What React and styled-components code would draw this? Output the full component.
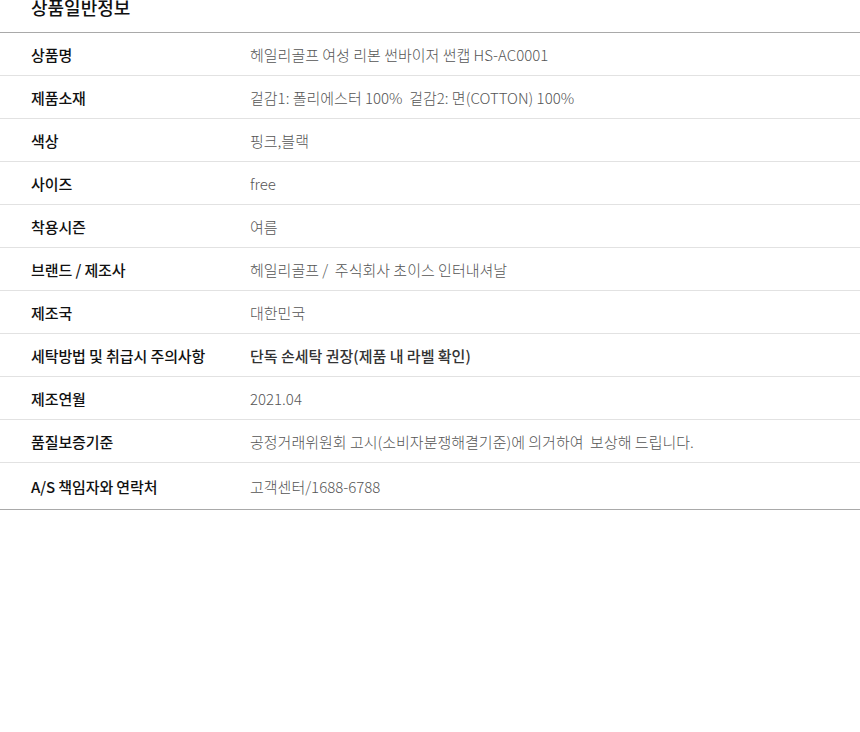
import React from "react";
import styled, { createGlobalStyle } from "styled-components";

const Global = createGlobalStyle`
  html, body { margin: 0; padding: 0; background: #fff; }
  body { font-family: "Noto Sans CJK KR", "Noto Sans", sans-serif; }
`;

const Wrap = styled.div`
  width: 860px;
`;

const Title = styled.h3`
  margin: -2px 0 0 0;
  padding: 0 0 0 31px;
  height: 34px;
  box-sizing: border-box;
  font-size: 18px;
  line-height: 18px;
  font-weight: 500;
  color: #111;
`;

const Table = styled.div`
  border-top: 1px solid #a9a9a9;
  border-bottom: 1px solid #a9a9a9;
`;

const Row = styled.div`
  display: grid;
  grid-template-columns: 219px 1fr;
  align-items: center;
  padding-left: 31px;
  height: ${(p) => (p.$tall ? 46 : 42)}px;
  border-bottom: ${(p) => (p.$last ? "none" : "1px solid #e2e2e2")};
`;

const Label = styled.div`
  font-size: 15px;
  font-weight: 500;
  color: #111;
  letter-spacing: -0.1px;
`;

const Value = styled.div`
  font-size: 15px;
  font-weight: ${(p) => (p.$strong ? 500 : 300)};
  color: ${(p) => (p.$strong ? "#333" : "#555")};
  white-space: pre;
`;

const rows = [
  ["상품명", "헤일리골프 여성 리본 썬바이저 썬캡 HS-AC0001"],
  ["제품소재", "겉감1: 폴리에스터 100%  겉감2: 면(COTTON) 100%"],
  ["색상", "핑크,블랙"],
  ["사이즈", "free"],
  ["착용시즌", "여름"],
  ["브랜드 / 제조사", "헤일리골프 /  주식회사 초이스 인터내셔날"],
  ["제조국", "대한민국"],
  ["세탁방법 및 취급시 주의사항", "단독 손세탁 권장(제품 내 라벨 확인)", true],
  ["제조연월", "2021.04"],
  ["품질보증기준", "공정거래위원회 고시(소비자분쟁해결기준)에 의거하여  보상해 드립니다."],
  ["A/S 책임자와 연락처", "고객센터/1688-6788"],
];

export default function App() {
  return (
    <Wrap>
      <Global />
      <Title>상품일반정보</Title>
      <Table>
        {rows.map(([l, v, s], i) => (
          <Row key={l} $last={i === rows.length - 1} $tall={i === rows.length - 1}>
            <Label>{l}</Label>
            <Value $strong={s}>{v}</Value>
          </Row>
        ))}
      </Table>
    </Wrap>
  );
}
